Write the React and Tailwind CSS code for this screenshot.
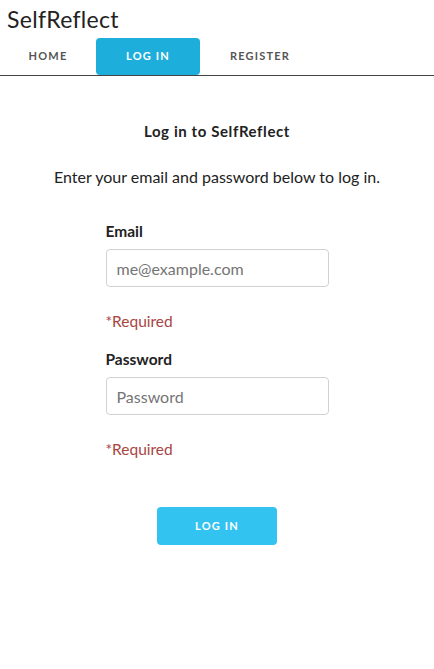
const Field = ({ label, type, placeholder }) => (
  <div className="flex flex-col">
    <label className="text-[15.5px] font-bold text-[#222] leading-[20px] mb-[8px]">{label}</label>
    <input
      type={type}
      placeholder={placeholder}
      className="w-[223px] h-[38px] border border-[#d1d1d1] rounded-[4px] px-[10px] text-[16px] text-[#222] placeholder:text-[#757575] bg-white outline-none"
    />
    <p className="mt-[24px] text-[15.5px] text-[#a94442] leading-[20px]">*Required</p>
  </div>
);

export default function App() {
  return (
    <div className="min-h-[669px] bg-white font-['Lato','Open_Sans',sans-serif] text-[#222]">
      <header>
        <h1 className="px-[7px] pt-[5px] text-[23px] tracking-[0.3px] leading-[28px] font-normal">SelfReflect</h1>
        <nav className="mt-[4px] flex items-end border-b border-[#444] h-[39px]">
          <a className="w-[96px] h-[37px] flex items-center justify-center text-[11px] font-bold tracking-[1.2px] text-[#555]">HOME</a>
          <a className="w-[104px] h-[37px] flex items-center justify-center rounded-[4px] bg-[#1eaedb] text-[11px] font-bold tracking-[1.2px] text-white">LOG IN</a>
          <a className="w-[120px] h-[37px] flex items-center justify-center text-[11px] font-bold tracking-[1.2px] text-[#555]">REGISTER</a>
        </nav>
      </header>
      <main className="flex flex-col items-center">
        <h2 className="mt-[45px] text-[15px] tracking-[0.6px] font-bold leading-[20px]">Log in to SelfReflect</h2>
        <p className="mt-[25px] text-[16px] leading-[22px]">Enter your email and password below to log in.</p>
        <form className="mt-[33px] flex flex-col gap-[18px]">
          <Field label="Email" type="email" placeholder="me@example.com" />
          <Field label="Password" type="password" placeholder="Password" />
          <div className="flex justify-center mt-[30px]">
            <button
              type="submit"
              className="w-[120px] h-[38px] rounded-[4px] bg-[#33c3f0] text-white text-[11px] font-bold tracking-[1.2px]"
            >
              LOG IN
            </button>
          </div>
        </form>
      </main>
    </div>
  );
}
